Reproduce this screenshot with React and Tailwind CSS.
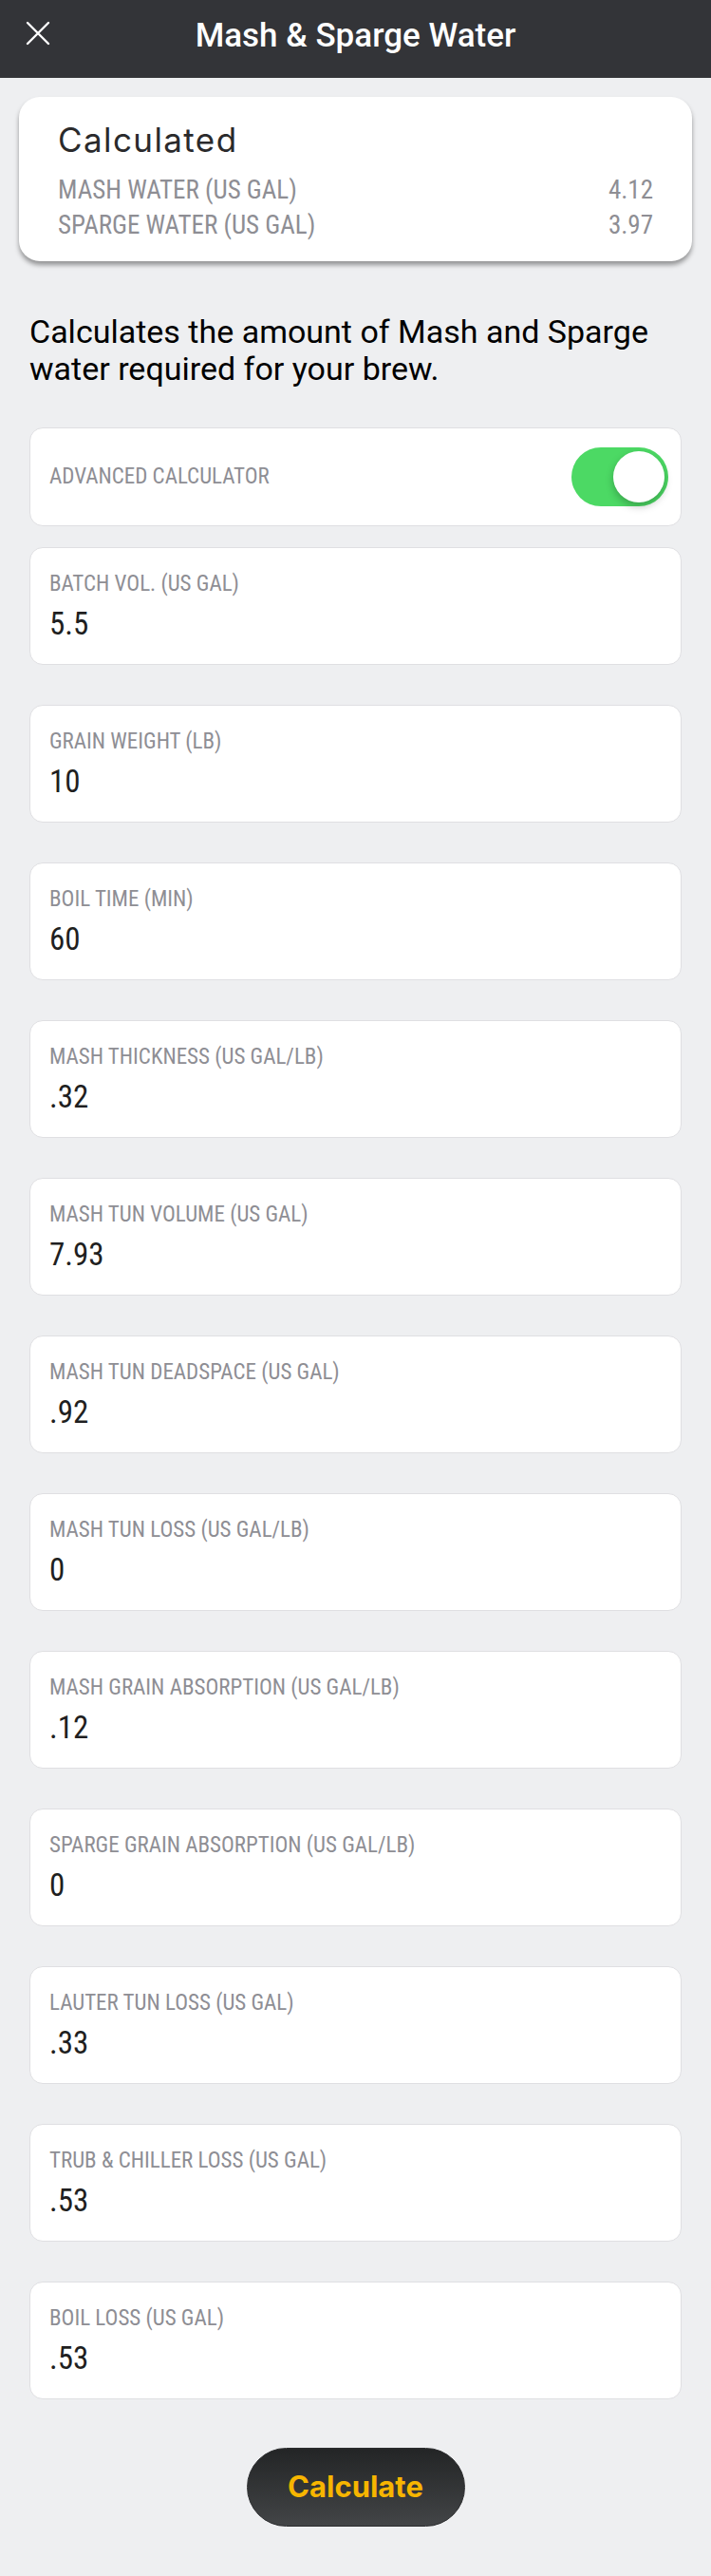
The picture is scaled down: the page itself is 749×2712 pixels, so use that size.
import React, { useState } from 'react'

const fields = [
    { label: 'BATCH VOL. (US GAL)', value: '5.5' },
    { label: 'GRAIN WEIGHT (LB)', value: '10' },
    { label: 'BOIL TIME (MIN)', value: '60' },
    { label: 'MASH THICKNESS (US GAL/LB)', value: '.32' },
    { label: 'MASH TUN VOLUME (US GAL)', value: '7.93' },
    { label: 'MASH TUN DEADSPACE (US GAL)', value: '.92' },
    { label: 'MASH TUN LOSS (US GAL/LB)', value: '0' },
    { label: 'MASH GRAIN ABSORPTION (US GAL/LB)', value: '.12' },
    { label: 'SPARGE GRAIN ABSORPTION (US GAL/LB)', value: '0' },
    { label: 'LAUTER TUN LOSS (US GAL)', value: '.33' },
    { label: 'TRUB & CHILLER LOSS (US GAL)', value: '.53' },
    { label: 'BOIL LOSS (US GAL)', value: '.53' },
]

function Field({ label, value }) {
    return (
        <div className="bg-white border border-[#dfdfe2] rounded-[14px] pl-5 pr-5 pt-6 pb-[22px]">
            <div className="font-['Liberation_Sans_Narrow','Roboto_Condensed',Roboto,sans-serif] text-[23px] leading-[28px] text-[#8e8e94]">{label}</div>
            <div className="mt-2 font-['Liberation_Sans_Narrow','Roboto_Condensed',Roboto,sans-serif] text-[33px] leading-[40px] text-[#1f1f21]">{value}</div>
        </div>
    )
}

export default function App() {
    const [advanced, setAdvanced] = useState(true)

    return (
        <div className="min-h-screen bg-[#eeeff1] font-['Roboto',sans-serif]">
            <header className="bg-[#333438] h-[82px] grid grid-cols-[1fr_auto_1fr] items-start">
                <button className="ml-[27px] mt-[22px] w-[26px] h-[26px] text-white">
                    <svg viewBox="0 0 26 26" width="26" height="26" fill="none" stroke="currentColor" strokeWidth="2.4" strokeLinecap="round">
                        <path d="M2 2L24 24M24 2L2 24" />
                    </svg>
                </button>
                <h1 className="pt-[18px] text-[35px] leading-[40px] font-medium text-white">Mash &amp; Sparge Water</h1>
                <div />
            </header>

            <main className="pb-[52px]">
                <div className="mx-5 mt-5 bg-white rounded-[22px] px-[41px] pt-[25px] pb-[19px] shadow-[0_4px_5px_rgba(0,0,0,0.38)]">
                    <h2 className="font-['Inter',sans-serif] text-[35px] leading-[40px] tracking-[0.04em] text-[#2a2a2c]">Calculated</h2>
                    <div className="mt-[15px] font-['Liberation_Sans_Narrow','Roboto_Condensed',Roboto,sans-serif] text-[27px] leading-[37px] text-[#8e8e94]">
                        <div className="flex justify-between">
                            <span>MASH WATER (US GAL)</span>
                            <span>4.12</span>
                        </div>
                        <div className="flex justify-between">
                            <span>SPARGE WATER (US GAL)</span>
                            <span>3.97</span>
                        </div>
                    </div>
                </div>

                <div className="px-[31px]">
                    <p className="mt-[55px] text-[34px] leading-[39px] text-black">Calculates the amount of Mash and Sparge water required for your brew.</p>

                    <div className="mt-[42px] h-[104px] bg-white border border-[#dfdfe2] rounded-[14px] pl-5 pr-[13px] flex items-center justify-between">
                        <span className="font-['Liberation_Sans_Narrow','Roboto_Condensed',Roboto,sans-serif] text-[23px] text-[#8e8e94]">ADVANCED CALCULATOR</span>
                        <button
                            onClick={() => setAdvanced(!advanced)}
                            className={`w-[102px] h-[62px] rounded-full p-1 flex ${advanced ? 'bg-[#4cd964] justify-end' : 'bg-[#e5e5ea] justify-start'}`}
                        >
                            <span className="w-[54px] h-[54px] rounded-full bg-white shadow-[0_4px_8px_rgba(0,0,0,0.25)]" />
                        </button>
                    </div>

                    <div className="mt-[22px] flex flex-col gap-[42px]">
                        {fields.map((f) => (
                            <Field key={f.label} label={f.label} value={f.value} />
                        ))}
                    </div>

                    <div className="mt-[51px] flex justify-center">
                        <button className="w-[230px] h-[83px] rounded-full border border-[#2a2b2d] bg-gradient-to-b from-[#232526] to-[#434547] font-['Inter',sans-serif] text-[31px] font-bold text-[#f7b500]">Calculate</button>
                    </div>
                </div>
            </main>
        </div>
    )
}
